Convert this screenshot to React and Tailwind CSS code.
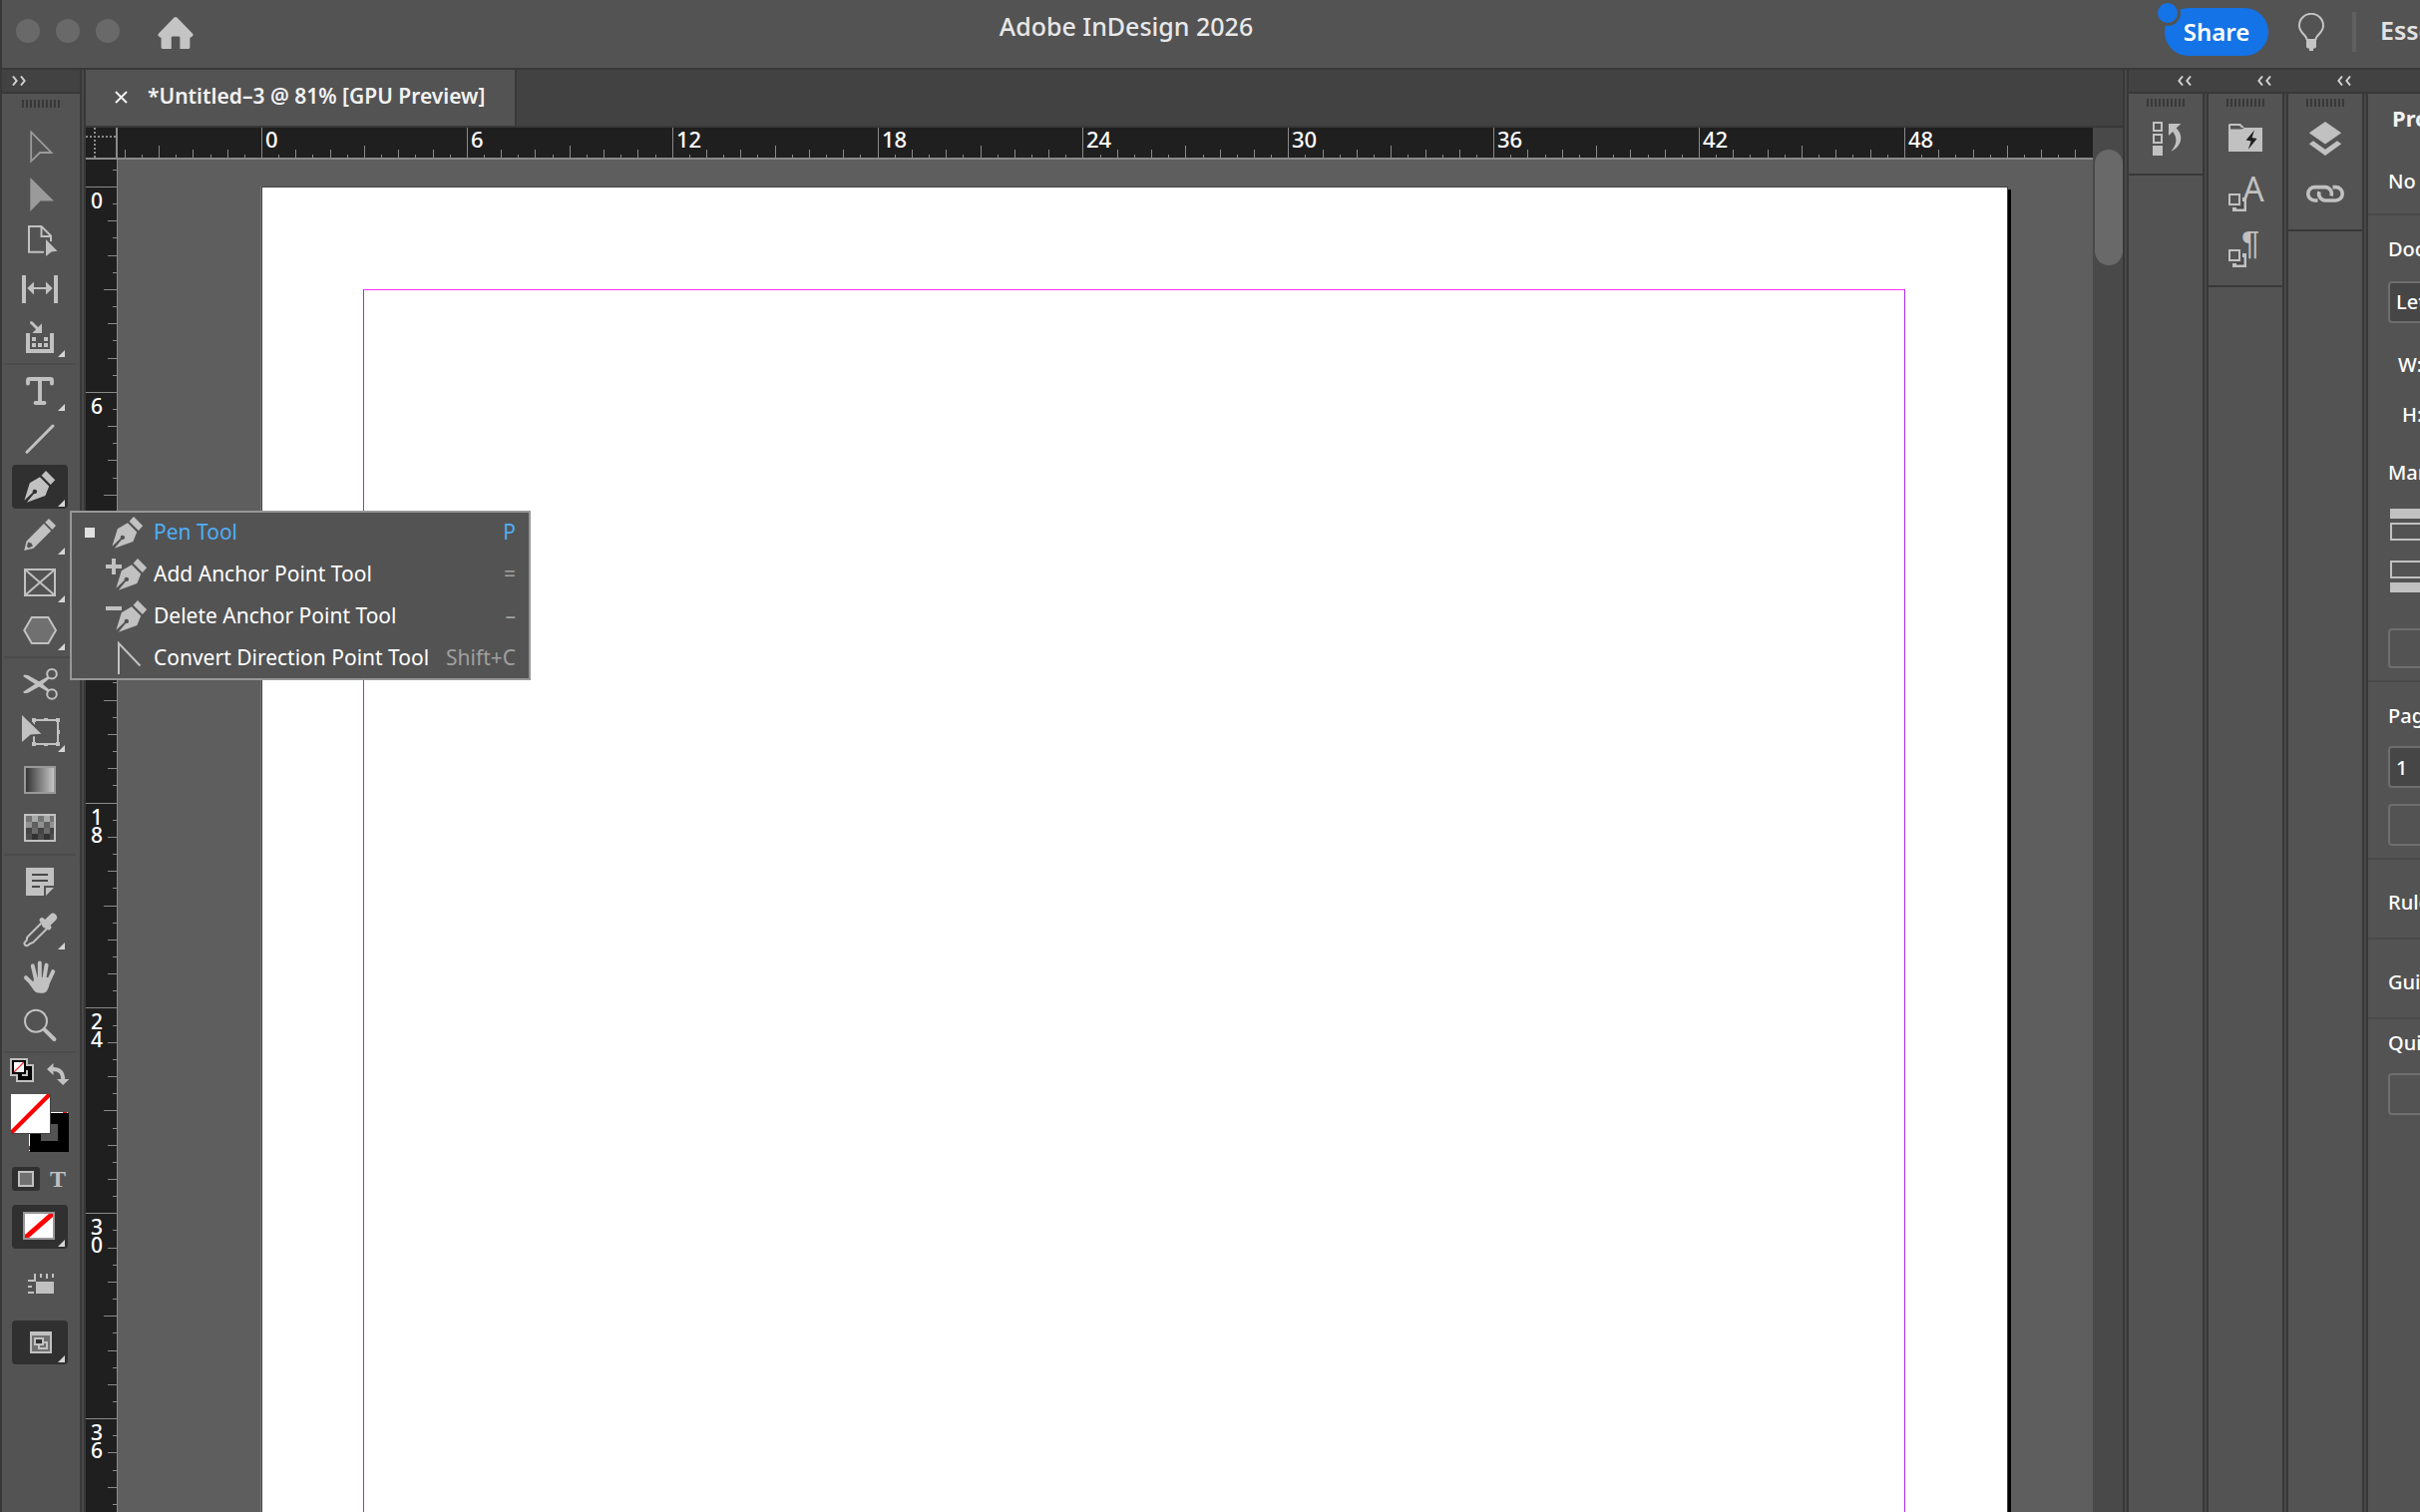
import React, { useState } from 'react';
import { Type } from 'lucide-react';

// Pixels per pica at the current zoom
const PICA = 34.31;
const LABEL_FONT = '"Noto Sans", "Open Sans", sans-serif';

const PenShape = () => (
  <>
    <path d="M22 0 L31.2 9.3 L26.8 14 L17.6 4.7 Z" />
    <path d="M16 6.2 L25.2 15.4 L21.4 25 L2.8 31.8 L10 22.9 A2.2 2.2 0 1 0 8.8 21.7 L0.4 29.8 L5.8 12.2 Z" />
  </>
);

const StackedSquares = () => (
  <>
    <path d="M34 31 H38 V45 H24 V41 H34 Z" fill="#c1c1c1" />
    <path d="M21 28 H31 V38 H21 Z" fill="#535353" stroke="#c1c1c1" strokeWidth="2" />
    <path d="M28 41.5 H34.5 V35" fill="none" stroke="#444" strokeWidth="2" />
  </>
);

const toolGroups = [
  [
    {
      name: 'Selection Tool',
      icon: <path d="M19.2 10.4 L39.6 31 H28 L19.2 39.6 Z" fill="none" stroke="#9a9a9a" strokeWidth="1.8" />
    },
    {
      name: 'Direct Selection Tool',
      icon: <path d="M18.3 8 L42 31.5 H28.5 L18.3 42 Z" fill="#9a9a9a" />
    },
    {
      name: 'Page Tool',
      icon: (
        <>
          <path d="M32 34.8 H17 V9 H29.5 L39 18.5 V24" fill="none" stroke="#c1c1c1" strokeWidth="2" />
          <path d="M29.5 9 V19 H39" fill="none" stroke="#c1c1c1" strokeWidth="2" />
          <path d="M34 22 L45.5 33.8 L39.5 34.5 L34 39 Z" />
        </>
      )
    },
    {
      name: 'Gap Tool',
      icon: (
        <>
          <path d="M10 10 H14 V38 H10 Z M42 10 H46 V38 H42 Z" />
          <path d="M15.3 23 L22 16.5 V22 H34 V16.5 L40.7 23 L34 29.5 V24 H22 V29.5 Z" />
        </>
      )
    },
    {
      name: 'Content Collector Tool',
      more: true,
      icon: (
        <>
          <path d="M14 20 H18 V36 H38 V20 H42 V40 H14 Z" />
          <path d="M20 24 h4 v4 h-4 Z M32 24 h4 v4 h-4 Z M20 30 h4 v4 h-4 Z M26 30 h4 v4 h-4 Z M32 30 h4 v4 h-4 Z" />
          <path d="M30 10.3 V20 H20.3 Z" />
          <path d="M19.5 9.5 L26 16" stroke="#c1c1c1" strokeWidth="3" strokeLinecap="round" />
        </>
      )
    }
  ],
  [
    {
      name: 'Type Tool',
      more: true,
      icon: <Type x={10} y={6} size={36} strokeWidth={2.6} color="#c1c1c1" />
    },
    {
      name: 'Line Tool',
      icon: <path d="M15 37.3 L41 11" stroke="#c1c1c1" strokeWidth="3" strokeLinecap="round" />
    },
    {
      name: 'Pen Tool',
      more: true,
      icon: (
        <g transform="translate(12 8)">
          <PenShape />
        </g>
      )
    },
    {
      name: 'Pencil Tool',
      more: true,
      icon: (
        <g transform="translate(12 8)" fillRule="evenodd">
          <path d="M25 0 L32 7 L28.4 10.9 L21.2 3.7 Z" />
          <path d="M20 5 L27.2 12.2 L9.6 29.8 L0.2 32 L2.6 22.4 Z M4.2 23.5 L2.9 27.8 L4.6 29.4 L9 27.6 L7.6 24.8 Z" />
        </g>
      )
    },
    {
      name: 'Rectangle Frame Tool',
      more: true,
      icon: <path d="M13 11 H43 V37 H13 Z L43 37 M43 11 L13 37" fill="none" stroke="#c1c1c1" strokeWidth="2" />
    },
    {
      name: 'Polygon Tool',
      more: true,
      icon: <path d="M12.3 24 L19.8 11 H36.4 L44 24 L36.4 37 H19.8 Z" fill="#707070" stroke="#c1c1c1" strokeWidth="2" />
    }
  ],
  [
    {
      name: 'Scissors Tool',
      icon: (
        <>
          <path d="M11 16 L12.6 14.6 L16 15 L28.6 22 L37.4 29.4 L35.6 31.4 L26 25.8 Z" />
          <path d="M11 31.8 L12.6 33.2 L16 32.8 L28.6 25.8 L37.4 18.4 L35.6 16.4 L26 22 Z" />
          <circle cx="40" cy="13.7" r="4.8" fill="none" stroke="#c1c1c1" strokeWidth="2" />
          <circle cx="40" cy="34" r="4.8" fill="none" stroke="#c1c1c1" strokeWidth="2" />
        </>
      )
    },
    {
      name: 'Free Transform Tool',
      more: true,
      icon: (
        <>
          <path d="M22 12 H46 V36 H22 Z" fill="none" stroke="#c1c1c1" strokeWidth="2" />
          <path d="M20 10 h4 v4 h-4 Z M32 10 h4 v3 h-4 Z M44 10 h4 v4 h-4 Z M45 22 h3 v4 h-3 Z M44 34 h4 v4 h-4 Z M32 35 h4 v3 h-4 Z M20 34 h4 v4 h-4 Z" />
          <path d="M10 7 L29.4 25.8 L18.6 26.4 L10 34 Z" stroke="#535353" strokeWidth="4" paintOrder="stroke" />
        </>
      )
    },
    {
      name: 'Gradient Swatch Tool',
      icon: (
        <>
          <defs>
            <linearGradient id="swatch-gradient">
              <stop offset="0" stopColor="#303030" />
              <stop offset="1" stopColor="#cacaca" />
            </linearGradient>
          </defs>
          <path d="M13 11 H43 V37 H13 Z" fill="url(#swatch-gradient)" stroke="#999" strokeWidth="2" />
        </>
      )
    },
    {
      name: 'Gradient Feather Tool',
      icon: (
        <>
          <path d="M14 12 H42 V18 H14 Z" fill="#737373" />
          <path d="M20 12 h6 v6 h-6 Z M32 12 h6 v6 h-6 Z" fill="#a6a9a8" />
          <path d="M14 18 H42 V24 H14 Z" fill="#909090" />
          <path d="M20 18 h6 v6 h-6 Z M32 18 h6 v6 h-6 Z" fill="#5f5f5f" />
          <path d="M14 24 H42 V30 H14 Z" fill="#444" />
          <path d="M20 24 h6 v6 h-6 Z M32 24 h6 v6 h-6 Z" fill="#6a6a6a" />
          <path d="M14 30 H42 V36 H14 Z" fill="#4c4c4c" />
          <path d="M20 30 h6 v6 h-6 Z M32 30 h6 v6 h-6 Z" fill="#333" />
          <path d="M13 11 H43 V37 H13 Z" fill="none" stroke="#c1c1c1" strokeWidth="2" />
        </>
      )
    }
  ],
  [
    {
      name: 'Note Tool',
      icon: (
        <>
          <path d="M14 10 H42 V28 H32 V38 H14 Z" />
          <path d="M34 30 H42 L34 38 Z" />
          <path d="M20 17 H36 M20 23 H36 M20 29 H28" stroke="#484848" strokeWidth="2" />
        </>
      )
    },
    {
      name: 'Eyedropper Tool',
      more: true,
      icon: (
        <>
          <path d="M29.5 17.5 L15.4 31.6 L14.6 35 L12.4 37.4 A2.4 2.4 0 0 0 15.6 40 L18 38.2 L21.2 37 L35.4 22.8" fill="none" stroke="#c1c1c1" strokeWidth="2" />
          <path d="M34 18.6 L41 11.8" stroke="#c1c1c1" strokeWidth="8" strokeLinecap="round" />
          <path d="M30 14.6 L37 21.8" stroke="#c1c1c1" strokeWidth="5" strokeLinecap="round" />
        </>
      )
    },
    {
      name: 'Hand Tool',
      icon: (
        <>
          <path d="M20.8 12.4 L24 26 M27.8 9.6 V24 M34.6 11.6 L32.4 25 M41.2 18.2 L36.6 28 M14 24.2 L22 32" fill="none" stroke="#c1c1c1" strokeWidth="4" strokeLinecap="round" />
          <path d="M22.4 24 H36 L38.8 27 C37.4 31 37.2 34 35 37.4 C33.6 39.4 31.4 39.8 28.6 39.8 C25 39.8 23 38.8 21.6 36.6 L17.4 30.6 L21 29.6 Z" />
        </>
      )
    },
    {
      name: 'Zoom Tool',
      icon: (
        <>
          <circle cx="24" cy="19.8" r="11" fill="none" stroke="#c1c1c1" strokeWidth="2" />
          <path d="M32.6 28.4 L42.4 38" stroke="#c1c1c1" strokeWidth="4" strokeLinecap="round" />
        </>
      )
    }
  ]
];

const penTools = [
  { name: 'Pen Tool', shortcut: 'P', active: true },
  { name: 'Add Anchor Point Tool', shortcut: '=', badge: 'M106 566 h16 v4 h-16 Z M112 560 h4 v16 h-4 Z' },
  { name: 'Delete Anchor Point Tool', shortcut: '–', badge: 'M106 566 h16 v4 h-16 Z' },
  { name: 'Convert Direction Point Tool', shortcut: 'Shift+C', corner: true }
];

const Divider = () => <div className="w-[6px] shrink-0 border-x-2 border-[#383838] bg-[#484848]" />;

const Grip = () => (
  <svg width="38" height="8" className="shrink-0" aria-hidden="true">
    {Array.from({ length: 10 }, (_, i) => (
      <rect key={i} x={i * 4} y="0" width="2" height="8" fill="#383838" />
    ))}
  </svg>
);

const Chevrons = ({ flip }) => (
  <svg width="14" height="10" viewBox="0 0 14 10" aria-hidden="true">
    <path
      d={flip ? 'M5 0.5 L1.4 5 L5 9.5 M13 0.5 L9.4 5 L13 9.5' : 'M1 0.5 L4.6 5 L1 9.5 M9 0.5 L12.6 5 L9 9.5'}
      fill="none"
      stroke="#d0d0d0"
      strokeWidth="2"
    />
  </svg>
);

const PenMenu = () => (
  <div
    role="menu"
    className="absolute left-[58px] top-12 z-20 flex w-[462px] flex-col gap-[2px] border-2 border-[#979797] bg-[#535353]"
  >
    {penTools.map((tool) => (
      <button
        key={tool.name}
        role="menuitem"
        className="flex h-10 items-center whitespace-nowrap px-[13px] text-[21px]"
      >
        <span className={`h-[10px] w-[10px] ${tool.active ? 'bg-[#e0e0e0]' : ''}`} />
        <svg width="48" height="36" viewBox="0 0 48 36" className="ml-[7px] shrink-0 fill-[#c1c1c1]" aria-hidden="true">
          {tool.corner ? (
            <path d="M17 34 V3 L38.5 25.5" fill="none" stroke="#c1c1c1" strokeWidth="2" />
          ) : (
            <g transform={tool.active ? 'translate(10 2)' : 'translate(14 2)'}>
              <PenShape />
            </g>
          )}
          {tool.badge && <path d={tool.badge} transform="translate(-102 -558)" />}
        </svg>
        <span className={`ml-1 ${tool.active ? 'text-[#4fadf5]' : 'text-white'}`}>{tool.name}</span>
        <span className={`ml-auto ${tool.active ? 'text-[#4fadf5]' : 'text-[#a0a0a0]'}`}>{tool.shortcut}</span>
      </button>
    ))}
  </div>
);

const ToolButton = ({ tool, selected, onSelect }) => (
  <div className="relative flex h-12 items-center">
    <button
      aria-label={tool.name}
      onClick={onSelect}
      className={`flex h-11 w-14 items-center justify-center rounded-[4px] ${selected ? 'bg-[#303030]' : ''}`}
    >
      <svg width="56" height="44" viewBox="0 2 56 44" className="fill-[#c1c1c1]" aria-hidden="true">
        {tool.icon}
        {tool.more && <path d="M53 37 V44 H46 Z" fill="#d5d5d5" />}
      </svg>
    </button>
    {selected && tool.name === 'Pen Tool' && <PenMenu />}
  </div>
);

const Separator = () => (
  <div className="-ml-2 flex h-[6px] w-[72px] items-center">
    <div className="h-[2px] w-full bg-[#4b4b4b]" />
  </div>
);

const Toolbar = () => {
  const [activeTool, setActiveTool] = useState('Pen Tool');

  return (
    <aside className="flex w-[78px] shrink-0 flex-col bg-[#535353]">
      <button aria-label="Expand tools" className="flex h-6 shrink-0 items-center border-b-2 border-[#383838] bg-[#424242] pl-[10px]">
        <Chevrons />
      </button>
      <div className="flex h-7 shrink-0 justify-center pt-[6px]">
        <Grip />
      </div>

      <div className="flex flex-col pl-[10px]">
        {toolGroups.map((group, i) => (
          <React.Fragment key={i}>
            {group.map((tool) => (
              <ToolButton
                key={tool.name}
                tool={tool}
                selected={activeTool === tool.name}
                onSelect={() => setActiveTool(tool.name)}
              />
            ))}
            <Separator />
          </React.Fragment>
        ))}

        {/* Fill and stroke */}
        <div className="-ml-[2px] flex h-9 items-start gap-[13px] pt-[3px]">
          <button aria-label="Default fill and stroke">
            <svg width="24" height="24" aria-hidden="true">
              <path d="M0 0 H18 V6 H24 V24 H6 V18 H0 Z" fill="#c1c1c1" />
              <path d="M8 8 H22 V22 H8 Z M2 2 H16 V16 H2 Z" fill="#000" />
              <path d="M12 16 H16 V12 H18 V18 H12 Z" fill="#c1c1c1" />
              <path d="M4 4 H14 V14 H4 Z" fill="#fff" />
              <path d="M4 14 L14 4" stroke="#f33" strokeWidth="1.2" />
            </svg>
          </button>
          <button aria-label="Swap fill and stroke" className="mt-[5px]">
            <svg width="23" height="22" viewBox="0 0 23 22" className="fill-[#c1c1c1]" aria-hidden="true">
              <path d="M0 6 L6.5 0 V12 Z M10 16 H22.4 L16.2 22 Z" />
              <path d="M6 6 C13 6 16.2 9 16.2 17" fill="none" stroke="#c1c1c1" strokeWidth="4" />
            </svg>
          </button>
        </div>
        <button aria-label="Fill and stroke" className="-ml-[1px] mt-[3px] w-[58px]">
          <svg width="58" height="58" aria-hidden="true">
            <path d="M18 18 H57 V19 H19 V57 H18 Z" fill="#fff" />
            <path d="M52 18 H56 V19 H52 Z M18 52 H19 V56 H18 Z" fill="#f00" />
            <path d="M19 19 H58 V58 H19 Z M30 30 V47 H47 V30 Z" fill="#000" fillRule="evenodd" />
            <path d="M0 0 H40 V40 H0 Z" fill="#444" />
            <path d="M0 0 H39 V39 H0 Z" fill="#fff" />
            <path d="M0 36 L36 0 H39 V3 L3 39 H0 Z" fill="#f00" />
          </svg>
        </button>

        <div className="mt-[15px] flex gap-[10px]">
          <button aria-label="Formatting affects container" className="flex h-6 w-7 items-center justify-center rounded-[3px] bg-[#303030]">
            <svg width="16" height="16" aria-hidden="true">
              <rect x="1" y="1" width="14" height="14" fill="#707070" stroke="#c1c1c1" strokeWidth="2" />
            </svg>
          </button>
          <button
            aria-label="Formatting affects text"
            className="flex h-6 w-4 items-center justify-center font-['Liberation_Serif',serif] text-[24px] leading-6 font-bold text-[#c1c1c1]"
          >
            T
          </button>
        </div>

        <button aria-label="Apply none" className="mt-[14px] h-11 w-14 rounded-[4px] bg-[#303030]">
          <svg width="56" height="44" aria-hidden="true">
            <rect x="12" y="8" width="30" height="26" fill="#fff" stroke="#979797" strokeWidth="2" />
            <path d="M13 30 L37 9 H41 V12 L17 33 H13 Z" fill="#f00" />
            <path d="M53 35 V42 H46 Z" fill="#d5d5d5" />
          </svg>
        </button>

        <button aria-label="View options" className="mt-[14px] h-11 w-14">
          <svg width="56" height="44" className="fill-[#c1c1c1]" aria-hidden="true">
            <path d="M24 19 H42 V31 H24 Z" />
            <path d="M22 11 h2 v8 h-8 v-2 h6 Z M28 11 h2 v4 h-2 Z M34 11 h2 v5 h-2 Z M40 11 h2 v4 h-2 Z M16 23 h4 v2 h-4 Z M16 29 h6 v2 h-6 Z" />
          </svg>
        </button>

        <button aria-label="Screen mode" className="mt-[14px] h-11 w-14 rounded-[4px] bg-[#303030]">
          <svg width="56" height="44" aria-hidden="true">
            <path d="M18 11 H40 V33 H18 Z" fill="#c1c1c1" />
            <path d="M20 15 H38 V31 H20 Z" fill="#707070" />
            <path d="M32 22 H35 V28 H27 V24" fill="none" stroke="#c1c1c1" strokeWidth="2" />
            <path d="M23 18 H31 V24 H23 Z" fill="#303030" stroke="#c1c1c1" strokeWidth="2" />
            <path d="M53 35 V42 H46 Z" fill="#d5d5d5" />
          </svg>
        </button>
      </div>
    </aside>
  );
};

const HorizontalRuler = () => {
  const ticks = Array.from({ length: 116 }, (_, i) => i - 8);
  return (
    <svg width="100%" height="30" className="block min-w-0 flex-1 overflow-visible bg-[#1f1f1f]" aria-hidden="true">
      {ticks.map((t) => {
        const x = Math.round(144 + (t * PICA) / 2);
        const h = t % 12 === 0 ? 30 : t % 6 === 0 ? 12 : t % 2 === 0 ? 8 : 3;
        return (
          <React.Fragment key={t}>
            <rect x={x} y={30 - h} width="1" height={h} fill="#8a8a8a" />
            {t % 12 === 0 && (
              <text x={x + 4} y="20" fill="#fff" fontSize="22" fontWeight="500" fontFamily={LABEL_FONT}>
                {t / 2}
              </text>
            )}
          </React.Fragment>
        );
      })}
    </svg>
  );
};

const VerticalRuler = () => {
  const ticks = Array.from({ length: 84 }, (_, i) => i - 1);
  return (
    <svg width="31" height="100%" className="block shrink-0 bg-[#1f1f1f]" aria-hidden="true">
      {ticks.map((t) => {
        const y = Math.round(27 + (t * PICA) / 2);
        const w = t % 12 === 0 ? 31 : t % 6 === 0 ? 13 : t % 2 === 0 ? 9 : 4;
        const digits = t % 12 === 0 ? String(t / 2).split('') : [];
        return (
          <React.Fragment key={t}>
            <rect x={31 - w} y={y} width={w} height="1" fill="#8a8a8a" />
            {digits.map((d, i) => (
              <text key={i} x="5" y={y + 22 + i * 18} fill="#fff" fontSize="21" fontWeight="500" fontFamily={LABEL_FONT}>
                {d}
              </text>
            ))}
          </React.Fragment>
        );
      })}
    </svg>
  );
};

const DocumentArea = () => (
  <main className="flex min-w-0 flex-1 flex-col">
    <div className="flex h-[58px] shrink-0 border-b-2 border-[#383838] bg-[#424242]">
      <div className="flex w-[432px] items-center border-r-2 border-[#383838] bg-[#535353] pb-[2px] pl-[29px]">
        <button aria-label="Close document" className="mr-5">
          <svg width="13" height="13" viewBox="0 0 13 13" aria-hidden="true">
            <path d="M1 1 L12 12 M12 1 L1 12" stroke="#f0f0f0" strokeWidth="2" />
          </svg>
        </button>
        <span className="whitespace-nowrap text-[21px] font-semibold text-[#f2f2f2]">*Untitled–3 @ 81% [GPU Preview]</span>
      </div>
    </div>

    <div className="flex min-h-0 flex-1">
      <div className="flex min-w-0 flex-1 flex-col">
        <div className="flex h-8 shrink-0 border-b-2 border-[#8a8a8a]">
          <svg width="32" height="30" className="shrink-0 bg-[#1f1f1f]" aria-hidden="true">
            <path d="M0 9 H30 M9 0 V30" stroke="#8a8a8a" strokeWidth="2" strokeDasharray="2 2" />
            <path d="M31 0 V30" stroke="#8a8a8a" strokeWidth="2" />
          </svg>
          <HorizontalRuler />
        </div>
        <div className="flex min-h-0 flex-1 overflow-hidden">
          <VerticalRuler />
          <div className="min-w-0 flex-1 overflow-hidden border-l border-[#8a8a8a] bg-[#5e5e5e] pl-[144px] pt-[27px]">
            {/* Page with its margin guides */}
            <div className="h-[2264px] w-[1751px] border border-[#444] bg-white py-[102px] pl-[101px] pr-[102px] shadow-[3px_3px_0_#000,-1px_0_0_#787878]">
              <div className="h-full border border-x-[#a12bf0] border-y-[#ff33ff]" />
            </div>
          </div>
        </div>
      </div>
      <div className="w-[30px] shrink-0 bg-[#494949] pl-[2px] pt-[22px]">
        <div className="h-[116px] rounded-full bg-[#696969]" />
      </div>
    </div>
  </main>
);

const dockColumns = [
  [
    {
      name: 'History',
      icon: (
        <>
          <path d="M25 12 h8 v8 h-8 Z M25 24 h8 v8 h-8 Z" fill="none" stroke="#c1c1c1" strokeWidth="2" />
          <path d="M24 35 h10 v10 h-10 Z" />
          <path d="M40 13 H52.4 L47.6 17.4 C55 24 54 35 42.4 40.8 C49 33 48.6 27 44.2 21 L40 25 Z" />
        </>
      )
    }
  ],
  [
    {
      name: 'CC Libraries',
      icon: (
        <>
          <path d="M20 14 L21 13 H32 L36 17 H54 V41 H20 Z" />
          <path d="M22 15 H31 L33 17 H36 L33 18.6 H22 Z" fill="#535353" />
          <path d="M46 19.4 L37.6 29.6 L42.6 30.4 L39.8 38.8 L48.6 28 L43.6 27 Z" fill="#1f1f1f" />
        </>
      )
    },
    {
      name: 'Character Styles',
      icon: (
        <>
          <StackedSquares />
          <text x="34" y="35" fontSize="34" fontFamily={LABEL_FONT}>A</text>
        </>
      )
    },
    {
      name: 'Paragraph Styles',
      icon: (
        <>
          <StackedSquares />
          <text x="33" y="32" fontSize="34" fontFamily='"Liberation Sans", sans-serif'>¶</text>
        </>
      )
    }
  ],
  [
    {
      name: 'Layers',
      icon: (
        <>
          <path d="M37 11 L53.2 22.3 L37 33.6 L20.8 22.3 Z" />
          <path d="M20.8 33.3 L25 30.2 L37 38.8 L49 30.2 L53.2 33.3 L37 45 Z" />
        </>
      )
    },
    {
      name: 'Links',
      icon: (
        <>
          <path d="M29.5 34 H26.5 A6.7 6.7 0 0 1 26.5 20.6 H37 A6.7 6.7 0 0 1 43 29.5" fill="none" stroke="#c1c1c1" strokeWidth="3.6" />
          <path d="M44.5 20.6 H47.5 A6.7 6.7 0 0 1 47.5 34 H37 A6.7 6.7 0 0 1 31 25.1" fill="none" stroke="#c1c1c1" strokeWidth="3.6" />
        </>
      )
    }
  ]
];

const DockColumn = ({ items }) => (
  <div className="w-[74px] shrink-0 bg-[#535353]">
    <div className="flex flex-col items-center border-b-2 border-[#383838] pb-[7px]">
      <div className="flex h-[17px] items-center pb-[2px] pt-[2px]">
        <Grip />
      </div>
      {items.map((item) => (
        <button key={item.name} aria-label={item.name} className="h-14 w-full">
          <svg width="74" height="56" viewBox="0 0 74 56" className="fill-[#c1c1c1]" aria-hidden="true">
            {item.icon}
          </svg>
        </button>
      ))}
    </div>
  </div>
);

const Rule = () => <div className="h-[2px] shrink-0 bg-[#494949]" />;

const MarginIcon = ({ flip }) => (
  <svg width="60" height="32" className={`block ${flip ? 'rotate-180' : ''}`} aria-hidden="true">
    <rect x="0" y="0" width="60" height="10" fill="#c1c1c1" />
    <rect x="1" y="15" width="58" height="16" fill="none" stroke="#c1c1c1" strokeWidth="2" />
  </svg>
);

const outlineButton = 'block w-[220px] rounded-[4px] border-2 border-[#6e6e6e]';
const field = 'block h-[42px] w-[220px] appearance-none rounded-[4px] border-2 border-[#6e6e6e] bg-[#464646] px-[6px] text-[20px] font-medium text-white';

const PropertiesPanel = () => (
  <section className="w-[52px] shrink-0 overflow-hidden whitespace-nowrap bg-[#535353] text-[20px] leading-7 font-medium text-white">
    <h2 className="flex h-[52px] items-center pb-1 pl-6 text-[22px] font-bold text-[#f2f2f2]">Properties</h2>
    <p className="flex h-[68px] items-center pl-5 pt-1">No Selection</p>
    <Rule />

    <div className="pb-3 pl-5 pt-5">
      <h3>Document</h3>
      <select aria-label="Page size" className={`mt-[18px] ${field}`}>
        <option>Letter</option>
      </select>
      <p className="mt-7 pl-[10px]">W:</p>
      <p className="mt-[22px] pl-[14px]">H:</p>
      <h3 className="mt-[30px]">Margins</h3>
      <div className="mt-[22px] flex flex-col gap-5 pl-[2px]">
        <MarginIcon />
        <MarginIcon flip />
      </div>
      <button aria-label="Adjust layout" className={`mt-9 h-10 ${outlineButton}`} />
    </div>
    <Rule />

    <div className="pb-3 pl-5 pt-5">
      <h3>Pages</h3>
      <input aria-label="Page" defaultValue="1" className={`mt-4 ${field}`} />
      <button aria-label="Edit page" className={`mt-4 h-[42px] ${outlineButton}`} />
    </div>
    <Rule />
    <h3 className="flex h-[78px] items-center pl-5 pt-2">Rulers &amp; Grids</h3>
    <Rule />
    <h3 className="flex h-[78px] items-center pl-5 pt-2">Guides</h3>
    <Rule />

    <div className="pl-5 pt-[10px]">
      <h3>Quick Actions</h3>
      <button aria-label="Import file" className={`mt-4 h-[42px] ${outlineButton}`} />
    </div>
  </section>
);

const Dock = () => (
  <div className="flex shrink-0 flex-col">
    <div className="flex h-6 shrink-0 gap-[6px] border-b-2 border-[#383838] bg-[#424242]">
      {dockColumns.map((_, i) => (
        <button key={i} aria-label="Expand panels" className="flex w-[74px] items-center justify-end pr-[11px]">
          <Chevrons flip />
        </button>
      ))}
    </div>
    <div className="flex min-h-0 flex-1">
      {dockColumns.map((items, i) => (
        <React.Fragment key={i}>
          <DockColumn items={items} />
          <Divider />
        </React.Fragment>
      ))}
      <PropertiesPanel />
    </div>
  </div>
);

const TitleBar = () => (
  <header className="flex h-[70px] shrink-0 overflow-hidden border-b-2 border-[#383838] bg-[#535353]">
    <div className="flex h-[62px] items-center gap-4 pl-[14px]">
      <span className="h-6 w-6 rounded-full bg-[#696969]" />
      <span className="h-6 w-6 rounded-full bg-[#696969]" />
      <span className="h-6 w-6 rounded-full bg-[#696969]" />
      <button aria-label="Home" className="ml-[22px] pt-1">
        <svg width="36" height="32" viewBox="0 0 36 32" className="fill-[#c4c4c4]" aria-hidden="true">
          <path d="M16.6 0.6 Q18 -0.6 19.4 0.6 L35.4 17 Q36 18.4 34.8 19.6 L32.4 21 V30.6 Q32.4 32 31 32 H22.4 V20.6 Q22.4 19.4 21 19.4 H15 Q13.8 19.4 13.8 20.6 V32 H5 Q3.6 32 3.6 30.6 V21 L1.2 19.6 Q0 18.4 0.6 17 Z" />
        </svg>
      </button>
    </div>
    <h1 className="flex h-[54px] min-w-0 flex-1 items-center justify-center pr-[106px] text-[25px] font-medium text-[#e8e8e8]">
      Adobe InDesign 2026
    </h1>
    <div className="flex h-16 items-center">
      <button className="relative h-12 w-[104px] rounded-full bg-[#1473e6] text-[24px] font-semibold text-white">
        Share
        <span className="absolute -left-[10px] -top-[8px] h-[26px] w-[26px] rounded-full border-3 border-[#535353] bg-[#1473e6]" />
      </button>
      <button aria-label="Learn" className="ml-[30px]">
        <svg width="26" height="38" viewBox="0 0 26 38" aria-hidden="true">
          <path d="M8.6 27 C8.6 21.4 1 20.6 1 12.8 A12 12 0 0 1 25 12.8 C25 20.6 17.4 21.4 17.4 27" fill="none" stroke="#c4c4c4" strokeWidth="2" />
          <path d="M8 26 H18 V34.4 L15 36 V38 H11 V36 L8 34.4 Z" fill="#c4c4c4" />
        </svg>
      </button>
      <span className="ml-7 h-10 w-1 bg-[#606060]" />
      <button className="ml-6 w-10 overflow-hidden whitespace-nowrap pb-[2px] text-left text-[25px] font-semibold text-[#e2e2e2]">
        Essentials
      </button>
    </div>
  </header>
);

const App = () => (
  <div className="flex h-screen flex-col overflow-hidden border-l-2 border-[#383838] bg-[#535353] font-['Noto_Sans','Open_Sans',sans-serif]">
    <TitleBar />
    <div className="flex min-h-0 flex-1">
      <Toolbar />
      <Divider />
      <DocumentArea />
      <Divider />
      <Dock />
    </div>
  </div>
);

export default App;
